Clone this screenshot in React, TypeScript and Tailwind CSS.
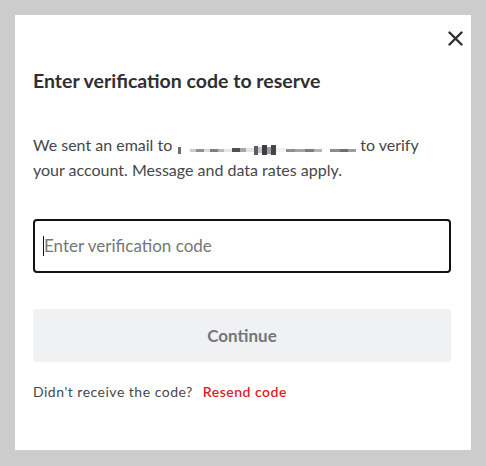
import React from 'react';

// pixelated redaction of the email address
const blocks = [
  { w: 6, c: '#ffffff', h: 4 },
  { w: 3, c: '#6f7075', h: 7 },
  { w: 9, c: '#ffffff', h: 4 },
  { w: 6, c: '#c9cacd', h: 3 },
  { w: 8, c: '#8e8f94', h: 3 },
  { w: 6, c: '#d9dadc', h: 3 },
  { w: 8, c: '#7d7e83', h: 3 },
  { w: 6, c: '#b8b9bd', h: 3 },
  { w: 8, c: '#e6e7e9', h: 3 },
  { w: 8, c: '#4f5055', h: 4 },
  { w: 6, c: '#a7a8ac', h: 4 },
  { w: 8, c: '#e2e3e5', h: 4 },
  { w: 4, c: '#5b5c61', h: 9 },
  { w: 4, c: '#c4c5c8', h: 6 },
  { w: 5, c: '#3d3e42', h: 10 },
  { w: 4, c: '#9fa0a4', h: 7 },
  { w: 5, c: '#45464a', h: 10 },
  { w: 10, c: '#f2f2f4', h: 4 },
  { w: 9, c: '#8d8e93', h: 3 },
  { w: 10, c: '#a3a4a8', h: 3 },
  { w: 9, c: '#7a7b80', h: 3 },
  { w: 8, c: '#b5b6ba', h: 3 },
  { w: 8, c: '#ffffff', h: 3 },
  { w: 10, c: '#8a8b90', h: 3 },
  { w: 8, c: '#6e6f74', h: 3 },
  { w: 8, c: '#9c9da1', h: 3 },
];

const Blur = () => (
  <span className="inline-flex items-center h-[12px] align-[-1px] mr-[4px]">
    {blocks.map((b, i) => (
      <span key={i} className="inline-block" style={{ width: b.w, height: b.h, background: b.c }} />
    ))}
  </span>
);

export default function App() {
  return (
    <div className="w-[486px] h-[466px] bg-[#cccccc] pt-[15px] pl-[15px]" style={{ fontFamily: 'Lato, "Open Sans", sans-serif' }}>
      <div className="w-[456px] h-[435px] bg-white px-[18px] pt-[15px]">
        <div className="flex justify-end -mr-[10px]">
          <button className="w-[16px] h-[16px] flex items-center justify-center text-[#2e2f32]">
            <svg width="15" height="15" viewBox="0 0 15 15" fill="none">
              <path d="M1.5 1.5L13.5 13.5M13.5 1.5L1.5 13.5" stroke="currentColor" strokeWidth="2.4" strokeLinecap="round" />
            </svg>
          </button>
        </div>
        <h2 className="mt-[22px] text-[19.5px] leading-[26px] font-bold text-[#2e2f32]">
          Enter verification code to reserve
        </h2>
        <p className="mt-[38px] w-[418px] text-[16px] leading-[25px] text-[#46474a]">
          We sent an email to<Blur />
          to verify your account. Message and data rates apply.
        </p>
        <div className="mt-[37px] h-[54px] w-[418px] border-2 border-[#111111] rounded-[4px] flex items-center pl-[8px]">
          <span className="w-px h-[20px] bg-[#111]" />
          <span className="text-[17px] text-[#74767c]">Enter verification code</span>
        </div>
        <button className="mt-[36px] h-[53px] w-[418px] rounded-[4px] bg-[#f0f1f3] text-[17px] font-bold text-[#74767c]">
          Continue
        </button>
        <div className="mt-[21px] text-[14px] leading-[18px] tracking-[0.5px] text-[#46474a] flex gap-[10px]">
          <span>Didn't receive the code?</span>
          <span className="text-[#de1c24] font-semibold">Resend code</span>
        </div>
      </div>
    </div>
  );
}
